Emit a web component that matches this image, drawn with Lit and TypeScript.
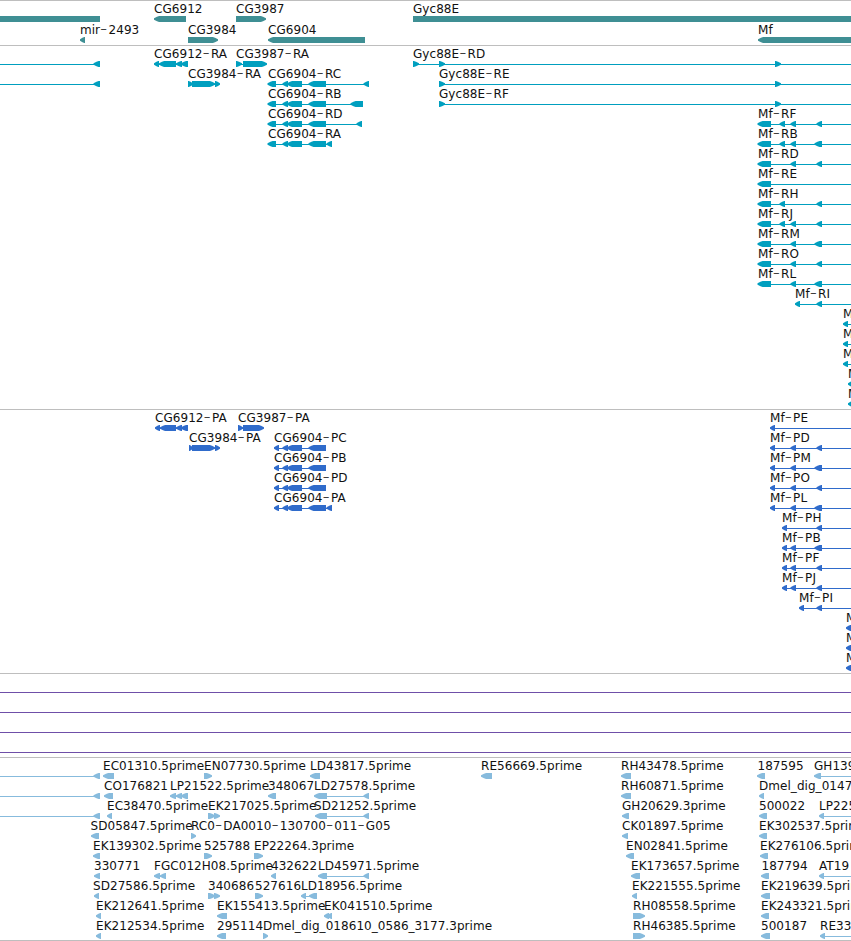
import { LitElement, html, svg, css } from 'lit';
import { customElement, property } from 'lit/decorators.js';

const WIDTH = 851;

interface Feature {
  label: string;
  x: number;
  exons: number[][];
  forward?: boolean;
  line?: number[]; // overrides the span of the intron line
}

type Row = Feature[];

const rev = (label: string, x: number, exons: number[][], line?: number[]): Feature => ({ label, x, exons, line });
const fwd = (label: string, x: number, exons: number[][], line?: number[]): Feature => ({ label, x, exons, line, forward: true });

// features that continue past the right edge of the view
const open = (label: string, x: number, exons: number[][]) => rev(label, x, exons, [x + 3, WIDTH]);
const openFwd = (label: string, x: number, exons: number[][]) => fwd(label, x, exons, [x + 1, WIDTH]);

// exons shared by the Mf isoforms
const A = [779.5, 785];
const B = [790.5, 796];
const C = [816.5, 822];
const D = [814.5, 822];

const mfR = (label: string, ...exons: number[][]) => open(label, 758, [[757.5, 771], ...exons]);
const mfP = (label: string, x: number, ...exons: number[][]) => open(label, x, [[x, x + 5], ...exons]);
const cg6904R = (label: string, last: number[]) =>
  rev(label, 268, [[267.5, 276], [282.5, 288], [287, 302], [308.5, 326], last]);
const cg6904P = (label: string, ...last: number[][]) =>
  rev(label, 274, [[274, 279], [282.5, 288], [287, 302], [308.5, 326], ...last]);
const leftEnd = () => rev('', 0, [[93.5, 100]], [0, 97]);

const genes: Row[] = [
  [
    rev('', 0, [[-10, 100]]),
    rev('CG6912', 154, [[154, 186]]),
    fwd('CG3987', 236, [[236, 266]]),
    fwd('Gyc88E', 413, [[413, 860]]),
  ],
  [
    rev('mir-2493', 80, [[80, 85]]),
    fwd('CG3984', 188, [[188, 218]]),
    rev('CG6904', 268, [[268, 365]]),
    rev('Mf', 758, [[758, 860]]),
  ],
];

const transcripts: Row[] = [
  [
    leftEnd(),
    rev('CG6912-RA', 154, [[154, 159], [159, 176], [176, 182], [181, 188]]),
    fwd('CG3987-RA', 236, [[236, 242], [243, 267]]),
    openFwd('Gyc88E-RD', 413, [[413, 419], [439, 445], [775, 781]]),
  ],
  [
    leftEnd(),
    fwd('CG3984-RA', 188, [[188, 193], [192, 215], [215, 220]]),
    cg6904R('CG6904-RC', [363.5, 369]),
    openFwd('Gyc88E-RE', 439, [[439, 445], [775, 781]]),
  ],
  [cg6904R('CG6904-RB', [350.5, 363]), openFwd('Gyc88E-RF', 439, [[439, 445], [775, 781]])],
  [cg6904R('CG6904-RD', [356.5, 362]), mfR('Mf-RF', A, B, C)],
  [cg6904R('CG6904-RA', [326.5, 332]), mfR('Mf-RB', A, B, D)],
  [mfR('Mf-RD', B, C)],
  [mfR('Mf-RE')],
  [mfR('Mf-RH', A, C)],
  [mfR('Mf-RJ', A, B, C)],
  [mfR('Mf-RM', B, D)],
  [mfR('Mf-RO', B, C)],
  [mfR('Mf-RL', B, D)],
  [open('Mf-RI', 795, [[795, 800], C])],
  [open('M', 843, [[843, 848]])],
  [open('M', 843, [[843, 848]])],
  [open('M', 843, [[843, 848]])],
  [open('M', 848, [[848, 853]])],
  [open('M', 848, [[848, 853]])],
];

const proteins: Row[] = [
  [
    rev('CG6912-PA', 155, [[155, 160], [160, 176], [176, 182], [181, 188]]),
    fwd('CG3987-PA', 238, [[238, 243], [243, 264]]),
    mfP('Mf-PE', 770),
  ],
  [
    fwd('CG3984-PA', 189, [[189, 193], [192, 215], [215, 220]]),
    cg6904P('CG6904-PC'),
    mfP('Mf-PD', 770, B, C),
  ],
  [cg6904P('CG6904-PB'), mfP('Mf-PM', 770, B, D)],
  [cg6904P('CG6904-PD'), mfP('Mf-PO', 770, B, C)],
  [cg6904P('CG6904-PA', [326.5, 332]), mfP('Mf-PL', 770, B, D)],
  [mfP('Mf-PH', 782, C)],
  [mfP('Mf-PB', 782, B, D)],
  [mfP('Mf-PF', 782, B, C)],
  [mfP('Mf-PJ', 782, B, C)],
  [mfP('Mf-PI', 799, C)],
  [mfP('M', 846)],
  [mfP('M', 846)],
  [mfP('M', 846)],
];

const spans: Row[] = [0, 1, 2, 3].map(() => [rev('', 0, [], [0, WIDTH])]);

const ests: Row[] = [
  [
    leftEnd(),
    rev('EC01310.5prime', 103, [[103, 114]]),
    fwd('EN07730.5prime', 204, [[204, 212]]),
    rev('LD43817.5prime', 310, [[310, 320]]),
    rev('RE56669.5prime', 481, [[481, 492]]),
    rev('RH43478.5prime', 621, [[621, 631]]),
    rev('187595', 757.5, [[757, 765]]),
    open('GH139', 814, [[814, 821]]),
  ],
  [
    leftEnd(),
    rev('CO176821', 104, [[104, 113]]),
    rev('LP21522.5prime', 170, [[170, 176], [176, 182], [181, 188]]),
    rev('348067', 268, [[268, 276]]),
    rev('LD27578.5prime', 314, [[314, 327], [363.5, 369]]),
    rev('RH60871.5prime', 621, [[621, 631]]),
    rev('Dmel_dig_0147', 759, [[759, 764]]),
  ],
  [
    leftEnd(),
    rev('EC38470.5prime', 107, [[107, 112]]),
    fwd('EK217025.5prime', 208, [[208, 215], [214, 220]]),
    rev('SD21252.5prime', 314, [[315, 327], [363.5, 369]]),
    rev('GH20629.3prime', 622, [[622, 629]]),
    rev('500022', 759, [[759, 767]]),
    open('LP225', 819, [[819, 824]]),
  ],
  [
    rev('SD05847.5prime', 90.5, [[91, 99]]),
    fwd('RC0-DA0010-130700-011-G05', 191, [[191, 196]]),
    rev('CK01897.5prime', 622, [[622, 628]]),
    rev('EK302537.5prime', 759, [[759, 767]]),
  ],
  [
    rev('EK139302.5prime', 93, [[93, 100]]),
    fwd('525788', 204, [[204, 212]]),
    fwd('EP22264.3prime', 254, [[254, 263]]),
    rev('EN02841.5prime', 626, [[626, 634]]),
    rev('EK276106.5prime', 760, [[760, 768]]),
  ],
  [
    rev('330771', 94, [[94, 100]]),
    rev('FGC012H08.5prime', 154, [[154, 160], [160, 166]]),
    rev('432622', 271, [[271, 276]]),
    rev('LD45971.5prime', 318, [[318, 327], [363.5, 369]]),
    rev('EK173657.5prime', 631, [[631, 640]]),
    rev('187794', 761.5, [[761, 769]]),
    open('AT19', 819, [[819, 824]]),
  ],
  [
    rev('SD27586.5prime', 93, [[94, 99]]),
    fwd('340686', 208, [[208, 215], [214, 220]]),
    fwd('527616', 255, [[255, 263]]),
    rev('LD18956.5prime', 301, [[301, 306], [309, 317]]),
    rev('EK221555.5prime', 632, [[632, 637]]),
    rev('EK219639.5prime', 761, [[761, 770]]),
  ],
  [
    rev('EK212641.5prime', 96, [[96, 101]]),
    rev('EK155413.5prime', 217, [[217, 227]]),
    rev('EK041510.5prime', 324, [[324, 329], [327, 332]]),
    fwd('RH08558.5prime', 633, [[633, 645]]),
    rev('EK243321.5prime', 761, [[761, 769]]),
  ],
  [
    rev('EK212534.5prime', 96, [[96, 101]]),
    rev('295114', 217, [[217, 226]]),
    fwd('Dmel_dig_018610_0586_3177.3prime', 263, [[263, 268]]),
    fwd('RH46385.5prime', 633, [[633, 645]]),
    rev('500187', 761, [[761, 770]]),
    open('RE33', 820, [[820, 825]]),
  ],
];

@customElement('genome-track')
export class GenomeTrack extends LitElement {
  @property({ attribute: false }) rows: Row[] = [];

  static styles = css`
    :host {
      display: block;
      border-top: 1px solid #bebebe;
      padding: 2px 0 1px;
      overflow: hidden;
    }

    :host(.tight) {
      padding-bottom: 0;
    }

    svg {
      display: block;
      width: 851px;
      height: var(--row-height, 20px);
      overflow: visible;
      fill: var(--track-color);
    }

    text {
      font: 12px "DejaVu Sans", sans-serif;
      letter-spacing: 0.05px;
      fill: #111;
      white-space: pre;
    }

    .dash {
      font-size: 20px;
      font-weight: 200;
      letter-spacing: 1.2px;
      baseline-shift: -1px;
    }
  `;

  // a bar with a blunt arrow head on its 3' end
  exon([a, b]: number[], forward?: boolean) {
    const head = Math.min(6, b - a);
    const tip = forward ? b : a;
    const tail = forward ? a : b;
    const dir = forward ? -1 : 1;
    const mid = tip + dir * head * 0.5;
    const neck = tip + dir * head * 0.85;
    const points = `${tail},13 ${neck},13 ${mid},13.7 ${tip},15.3 ${tip},16.7 ${mid},18.3 ${neck},19 ${tail},19`;
    return svg`<polygon points=${points}></polygon>`;
  }

  feature(f: Feature) {
    const last = f.exons[f.exons.length - 1];
    const [from, to] = f.line ?? [f.x + 2, last[1] - 2];
    const parts = f.label.split('-');
    return svg`
      <rect x=${from} y="16" width=${to - from} height="1"></rect>
      ${f.exons.map((e) => this.exon(e, f.forward))}
      ${f.label
        ? svg`<text x=${f.x} y="10">${parts.map((p, i) => (i ? svg`<tspan class="dash">-</tspan>${p}` : p))}</text>`
        : ''}
    `;
  }

  render() {
    return this.rows.map((row) => html`<svg>${row.map((f) => this.feature(f))}</svg>`);
  }
}

@customElement('app-root')
export class AppRoot extends LitElement {
  static styles = css`
    :host {
      display: flex;
      flex-direction: column;
      width: 851px;
      height: 941px;
      overflow: hidden;
      box-sizing: border-box;
      background: #fff;
      border-bottom: 1px solid #bebebe;
    }

    .genes { --track-color: #3f8f94; --row-height: 21px; }
    .transcripts { --track-color: #009fbf; }
    .proteins { --track-color: #2f6bcb; }
    .spans { --track-color: #6f4fa8; }
    .ests { --track-color: #87bbdd; }
  `;

  render() {
    return html`
      <genome-track class="genes tight" .rows=${genes}></genome-track>
      <genome-track class="transcripts" .rows=${transcripts}></genome-track>
      <genome-track class="proteins" .rows=${proteins}></genome-track>
      <genome-track class="spans" .rows=${spans}></genome-track>
      <genome-track class="ests tight" .rows=${ests}></genome-track>
    `;
  }
}
